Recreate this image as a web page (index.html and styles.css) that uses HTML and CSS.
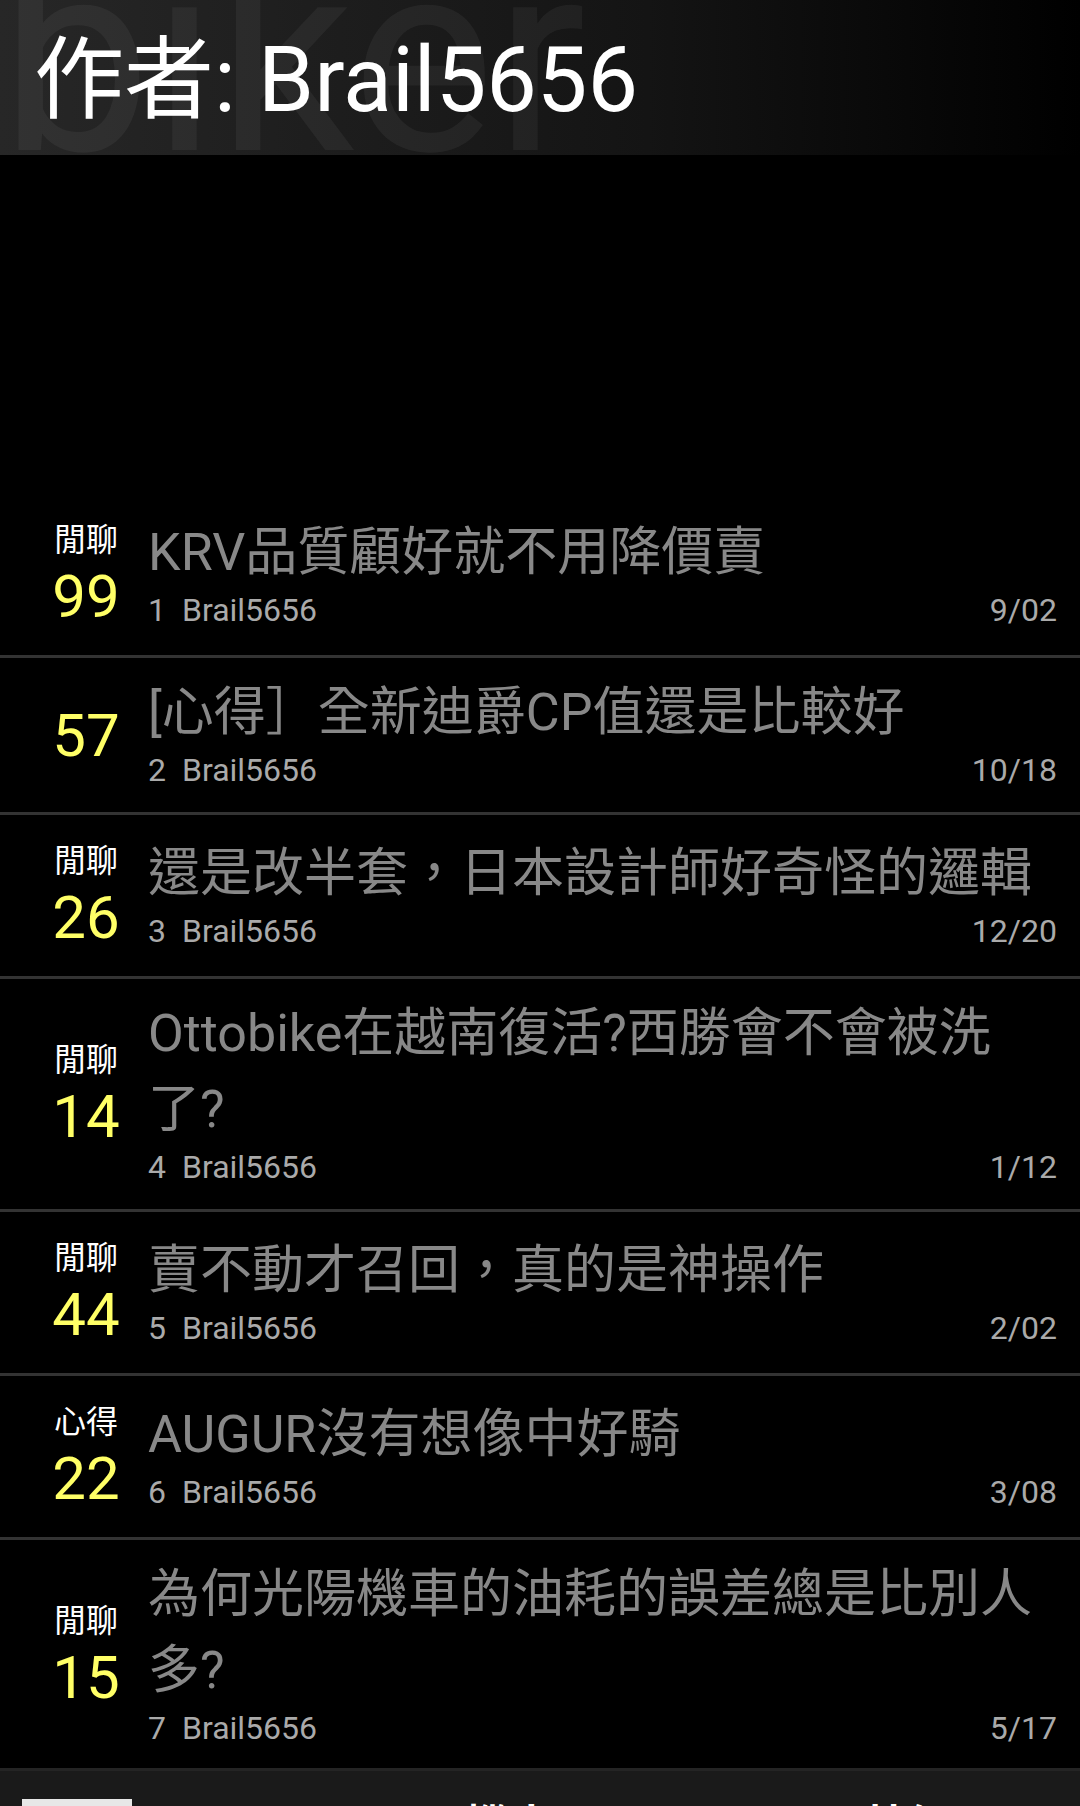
FILE: index.html
```html
<!DOCTYPE html>
<html lang="zh-Hant">
<head>
  <meta charset="UTF-8" />
  <meta name="viewport" content="width=device-width, initial-scale=1.0"/>
  <title>作者: Brail5656</title>
  <link rel="stylesheet" href="styles.css">
</head>
<body>
  <header class="author-bar">
    <span class="watermark">biker</span>
    <h1 class="author-name">作者: Brail5656</h1>
  </header>

  <div class="ad-slot"></div>

  <ul class="thread-list">
    <li class="thread">
      <div class="thread-score">
        <span class="thread-tag">閒聊</span>
        <span class="thread-count">99</span>
      </div>
      <div class="thread-body">
        <div class="thread-title">KRV品質顧好就不用降價賣</div>
        <div class="thread-meta"><span class="thread-no">1</span><span>Brail5656</span><span class="thread-date">9/02</span></div>
      </div>
    </li>
    <li class="thread">
      <div class="thread-score">
        <span class="thread-count">57</span>
      </div>
      <div class="thread-body">
        <div class="thread-title">[心得］全新迪爵CP值還是比較好</div>
        <div class="thread-meta"><span class="thread-no">2</span><span>Brail5656</span><span class="thread-date">10/18</span></div>
      </div>
    </li>
    <li class="thread">
      <div class="thread-score">
        <span class="thread-tag">閒聊</span>
        <span class="thread-count">26</span>
      </div>
      <div class="thread-body">
        <div class="thread-title">還是改半套，日本設計師好奇怪的邏輯</div>
        <div class="thread-meta"><span class="thread-no">3</span><span>Brail5656</span><span class="thread-date">12/20</span></div>
      </div>
    </li>
    <li class="thread">
      <div class="thread-score">
        <span class="thread-tag">閒聊</span>
        <span class="thread-count">14</span>
      </div>
      <div class="thread-body">
        <div class="thread-title">Ottobike在越南復活?西勝會不會被洗了?</div>
        <div class="thread-meta"><span class="thread-no">4</span><span>Brail5656</span><span class="thread-date">1/12</span></div>
      </div>
    </li>
    <li class="thread">
      <div class="thread-score">
        <span class="thread-tag">閒聊</span>
        <span class="thread-count">44</span>
      </div>
      <div class="thread-body">
        <div class="thread-title">賣不動才召回，真的是神操作</div>
        <div class="thread-meta"><span class="thread-no">5</span><span>Brail5656</span><span class="thread-date">2/02</span></div>
      </div>
    </li>
    <li class="thread">
      <div class="thread-score">
        <span class="thread-tag">心得</span>
        <span class="thread-count">22</span>
      </div>
      <div class="thread-body">
        <div class="thread-title">AUGUR沒有想像中好騎</div>
        <div class="thread-meta"><span class="thread-no">6</span><span>Brail5656</span><span class="thread-date">3/08</span></div>
      </div>
    </li>
    <li class="thread">
      <div class="thread-score">
        <span class="thread-tag">閒聊</span>
        <span class="thread-count">15</span>
      </div>
      <div class="thread-body">
        <div class="thread-title">為何光陽機車的油耗的誤差總是比別人多?</div>
        <div class="thread-meta"><span class="thread-no">7</span><span>Brail5656</span><span class="thread-date">5/17</span></div>
      </div>
    </li>
  </ul>

  <div class="banner">
    <div class="banner-thumb"></div>
    <div class="banner-text">little bike 機車 life style 特價 bike 旅遊</div>
  </div>
</body>
</html>
```

FILE: styles.css
```css
html, body {
  margin: 0;
  height: 1806px;
  overflow: hidden;
}

body {
  background: #000;
  font-family: Roboto, "Noto Sans CJK TC", sans-serif;
  color: #fff;
}

/* header */
.author-bar {
  position: relative;
  height: 155px;
  box-sizing: border-box;
  padding: 6px 0 0 34px;
  background: linear-gradient(to right, #272727, #141414 60%, #000);
  overflow: hidden;
}

.watermark {
  position: absolute;
  left: 0;
  top: -77px;
  font-size: 270px;
  line-height: 1;
  color: rgba(255, 255, 255, 0.05);
}

.author-name {
  position: relative;
  margin: 0;
  font-size: 90px;
  font-weight: normal;
  line-height: 149px;
  white-space: nowrap;
}

.ad-slot {
  height: 339px;
}

/* list */
.thread-list {
  list-style: none;
  margin: 0;
  padding: 0;
}

.thread {
  display: flex;
  align-items: center;
  padding: 24px 23px 24px 0;
  border-bottom: 3px solid #333;
}

.thread-score {
  width: 124px;
  margin-left: 24px;
  flex-shrink: 0;
  display: flex;
  flex-direction: column;
  align-items: center;
}

.thread-tag {
  font-size: 32px;
  line-height: 44px;
  color: #fff;
}

.thread-count {
  font-size: 60px;
  line-height: 69px;
  color: #ffff66;
}

.thread-body {
  flex: 1;
  min-width: 0;
}

.thread-title {
  margin-top: -7px;
  font-size: 52px;
  line-height: 76px;
  color: #888;
  padding-right: 21px;
}

.thread-meta {
  display: flex;
  margin-top: 1px;
  font-size: 32px;
  line-height: 36px;
  color: #aaa;
}

.thread-no {
  margin-right: 16px;
}

.thread-date {
  margin-left: auto;
}

/* bottom banner */
.banner {
  position: fixed;
  left: 0;
  right: 0;
  bottom: 0;
  height: 38px;
  box-sizing: border-box;
  display: flex;
  align-items: flex-start;
  padding: 28px 0 0 22px;
  background: #1a1a1a;
  border-top: 3px solid #242424;
  overflow: hidden;
}

.banner-thumb {
  width: 110px;
  height: 60px;
  background: #e7e7e7;
  flex-shrink: 0;
}

.banner-text {
  margin: -2px 0 0 60px;
  font-size: 44px;
  font-weight: bold;
  line-height: 60px;
  white-space: nowrap;
  word-spacing: 40px;
  color: #fff;
}
```
